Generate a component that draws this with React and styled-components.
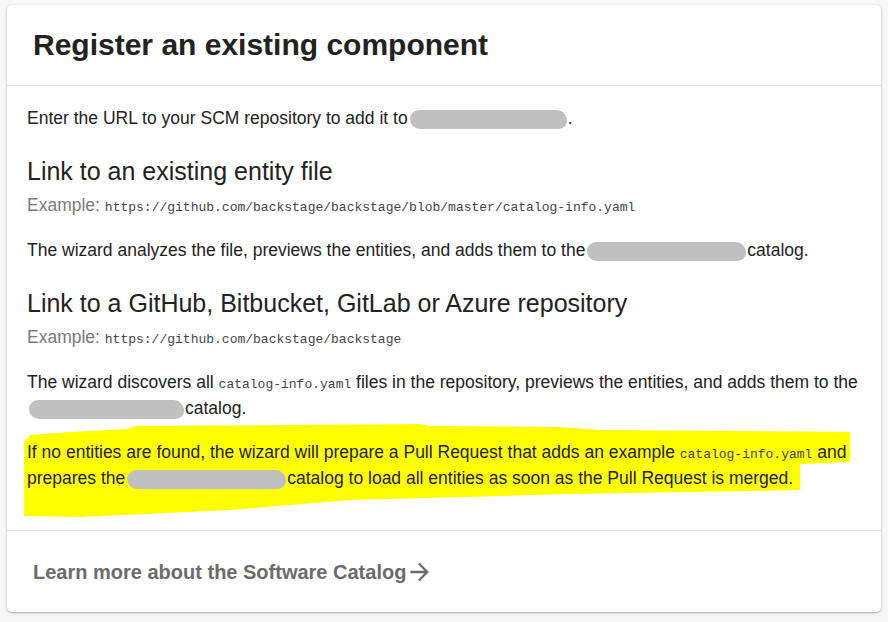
import React from "react";
import styled, { createGlobalStyle } from "styled-components";

const GlobalStyle = createGlobalStyle`
  body {
    margin: 0;
    padding: 5px 7px;
    background: #f7f7f7;
    font-family: "Liberation Sans", Arial, sans-serif;
    color: #222;
  }
`;

const Card = styled.div`
  background: #fff;
  border-radius: 5px;
  box-shadow: 0 1px 3px rgba(0, 0, 0, 0.25), 0 1px 1px rgba(0, 0, 0, 0.1);
  width: 874px;
`;

const CardHeader = styled.div`
  padding: 20px 26px;
  border-bottom: 1px solid #e0e0e0;
`;

const Title = styled.h1`
  margin: 0;
  font-size: 30px;
  font-weight: bold;
  color: #222;
  line-height: 40px;
`;

const CardBody = styled.div`
  padding: 19px 20px 15px;
  border-bottom: 1px solid #e0e0e0;
`;

const Text = styled.p`
  position: relative;
  margin: 0 0 ${(p) => p.gap || 0}px;
  font-size: 17.5px;
  line-height: 26px;
  color: #222;
`;

const Heading = styled.h2`
  margin: 0 0 4px;
  font-size: 25px;
  font-weight: normal;
  line-height: 32px;
  color: #222;
`;

const Example = styled.div`
  font-size: 17.5px;
  line-height: 28px;
  color: #7a7a7a;
  margin-bottom: 18px;
`;

const Code = styled.code`
  font-family: "Liberation Mono", "DejaVu Sans Mono", monospace;
  font-size: 13px;
  line-height: 1;
  color: #444;
`;

const Redacted = styled.span`
  display: inline-block;
  width: ${(p) => p.w}px;
  height: 19px;
  margin: 0 1px 0 2px;
  background: #c0c0c0;
  border-radius: 10px 12px 9px 11px;
  vertical-align: middle;
`;

const Highlight = styled.div`
  position: relative;
  padding: 14px 0 24px;
`;

const Marker = styled.svg`
  position: absolute;
  left: -5px;
  top: -5px;
`;

const CardFooter = styled.div`
  padding: 27px 26px 26px;
`;

const LearnMore = styled.a`
  display: inline-flex;
  align-items: center;
  gap: 2px;
  font-size: 20px;
  font-weight: bold;
  color: #6b6b6b;
  text-decoration: none;
  line-height: 26px;
`;

const Arrow = () => (
  <svg width="28" height="28" viewBox="2 0 24 24" fill="#6b6b6b">
    <path d="M12 4l-1.41 1.41L16.17 11H4v2h12.17l-5.58 5.59L12 20l8-8z" />
  </svg>
);

export default function App() {
  return (
    <>
      <GlobalStyle />
      <Card>
        <CardHeader>
          <Title>Register an existing component</Title>
        </CardHeader>
        <CardBody>
          <Text gap={24}>
            Enter the URL to your SCM repository to add it to
            <Redacted w={157} />.
          </Text>
          <Heading>Link to an existing entity file</Heading>
          <Example>
            Example:{" "}
            <Code>https://github.com/backstage/backstage/blob/master/catalog-info.yaml</Code>
          </Example>
          <Text gap={24}>
            The wizard analyzes the file, previews the entities, and adds them to the
            <Redacted w={159} />catalog.
          </Text>
          <Heading>Link to a GitHub, Bitbucket, GitLab or Azure repository</Heading>
          <Example>
            Example: <Code>https://github.com/backstage/backstage</Code>
          </Example>
          <Text gap={4}>
            The wizard discovers all <Code>catalog-info.yaml</Code> files in the
            repository, previews the entities, and adds them to the
            <Redacted w={155} />catalog.
          </Text>
          <Highlight>
            <Marker width="832" height="100" viewBox="22 420 832 100">
              <path
                fill="#ffff00"
                d="M24 442 L30 435 L70 432 L128 429 L135 426 L420 424 L430 426 L560 427 L600 430 L850 432 L850 462 L800 464 L800 490 L570 494 L350 500 L230 510 L80 517 L24 516 Z"
              />
            </Marker>
            <Text>
              If no entities are found, the wizard will prepare a Pull Request that
              adds an example <Code>catalog-info.yaml</Code> and prepares the
              <Redacted w={159} />catalog to load all entities as soon as the Pull
              Request is merged.
            </Text>
          </Highlight>
        </CardBody>
        <CardFooter>
          <LearnMore href="#">
            Learn more about the Software Catalog
            <Arrow />
          </LearnMore>
        </CardFooter>
      </Card>
    </>
  );
}
